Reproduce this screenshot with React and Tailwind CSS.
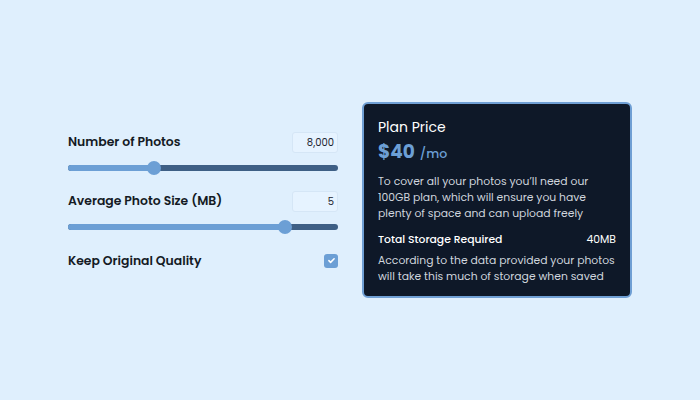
import { useState } from "react";

const FONT = { fontFamily: "Poppins, Inter, 'Noto Sans', sans-serif" };

function Slider({ value, max }) {
  const pct = (value / max) * 100;
  return (
    <div className="relative h-[14px] flex items-center">
      <div className="w-full h-[6px] rounded-full bg-[#3e5f85] overflow-hidden">
        <div className="h-full bg-[#6c9fd5]" style={{ width: `${pct}%` }} />
      </div>
      <div
        className="absolute top-0 w-[14px] h-[14px] -ml-[7px] rounded-full bg-[#6c9fd5]"
        style={{ left: `${pct}%` }}
      />
    </div>
  );
}

function NumberRow({ label, value }) {
  return (
    <div className="flex items-center justify-between">
      <span className="text-[12.4px] font-semibold text-[#141a24]">{label}</span>
      <div className="w-[46px] h-[21px] rounded-[3px] border border-[#d5e6f6] bg-[#e6f3ff] text-[10px] text-[#1c2430] flex items-center justify-end pr-[3px]">
        {value}
      </div>
    </div>
  );
}

export default function App() {
  const [keep, setKeep] = useState(true);

  return (
    <div
      className="w-[700px] h-[400px] bg-[#dfeffd] flex items-center justify-center gap-[24px]"
      style={FONT}
    >
      {/* left: inputs */}
      <div className="w-[270px] flex flex-col pt-[2px]">
        <NumberRow label="Number of Photos" value="8,000" />
        <div className="mt-[8px]">
          <Slider value={86} max={270} />
        </div>
        <div className="mt-[16px]">
          <NumberRow label="Average Photo Size (MB)" value="5" />
        </div>
        <div className="mt-[8px]">
          <Slider value={217} max={270} />
        </div>
        <div className="mt-[18px] flex items-center justify-between">
          <span className="text-[12.4px] font-semibold text-[#141a24]">
            Keep Original Quality
          </span>
          <button
            onClick={() => setKeep((p) => !p)}
            className={`w-[14px] h-[14px] rounded-[3px] flex items-center justify-center ${
              keep ? "bg-[#6c9fd5]" : "bg-white border border-[#9bbbe0]"
            }`}
          >
            {keep && (
              <svg width="9" height="9" viewBox="0 0 12 12" fill="none">
                <path
                  d="M2.5 6.2l2.3 2.3 4.7-4.9"
                  stroke="white"
                  strokeWidth="2"
                  strokeLinecap="round"
                  strokeLinejoin="round"
                />
              </svg>
            )}
          </button>
        </div>
      </div>

      {/* right: plan card */}
      <div className="w-[270px] h-[196px] rounded-[6px] border-2 border-[#6f9fd4] bg-[#0e1828] pl-[14px] pr-[12px] pt-[13px] text-white">
        <p className="text-[14px] leading-[20px]">Plan Price</p>
        <p className="mt-[1px] text-[#6c9fd5] leading-[28px]">
          <span className="text-[18.5px] font-bold">$40</span>
          <span className="text-[12.5px] font-medium ml-[5px]">/mo</span>
        </p>
        <p className="mt-[6px] text-[10.8px] leading-[16px] text-[#cfd5dd]">
          To cover all your photos you’ll need our 100GB plan, which will ensure
          you have plenty of space and can upload freely
        </p>
        <div className="mt-[10px] pr-[2px] flex items-center justify-between text-[10.8px] leading-[16px]">
          <span className="font-medium">Total Storage Required</span>
          <span>40MB</span>
        </div>
        <p className="mt-[5px] text-[10.8px] leading-[16px] text-[#cfd5dd]">
          According to the data provided your photos will take this much of
          storage when saved
        </p>
      </div>
    </div>
  );
}
